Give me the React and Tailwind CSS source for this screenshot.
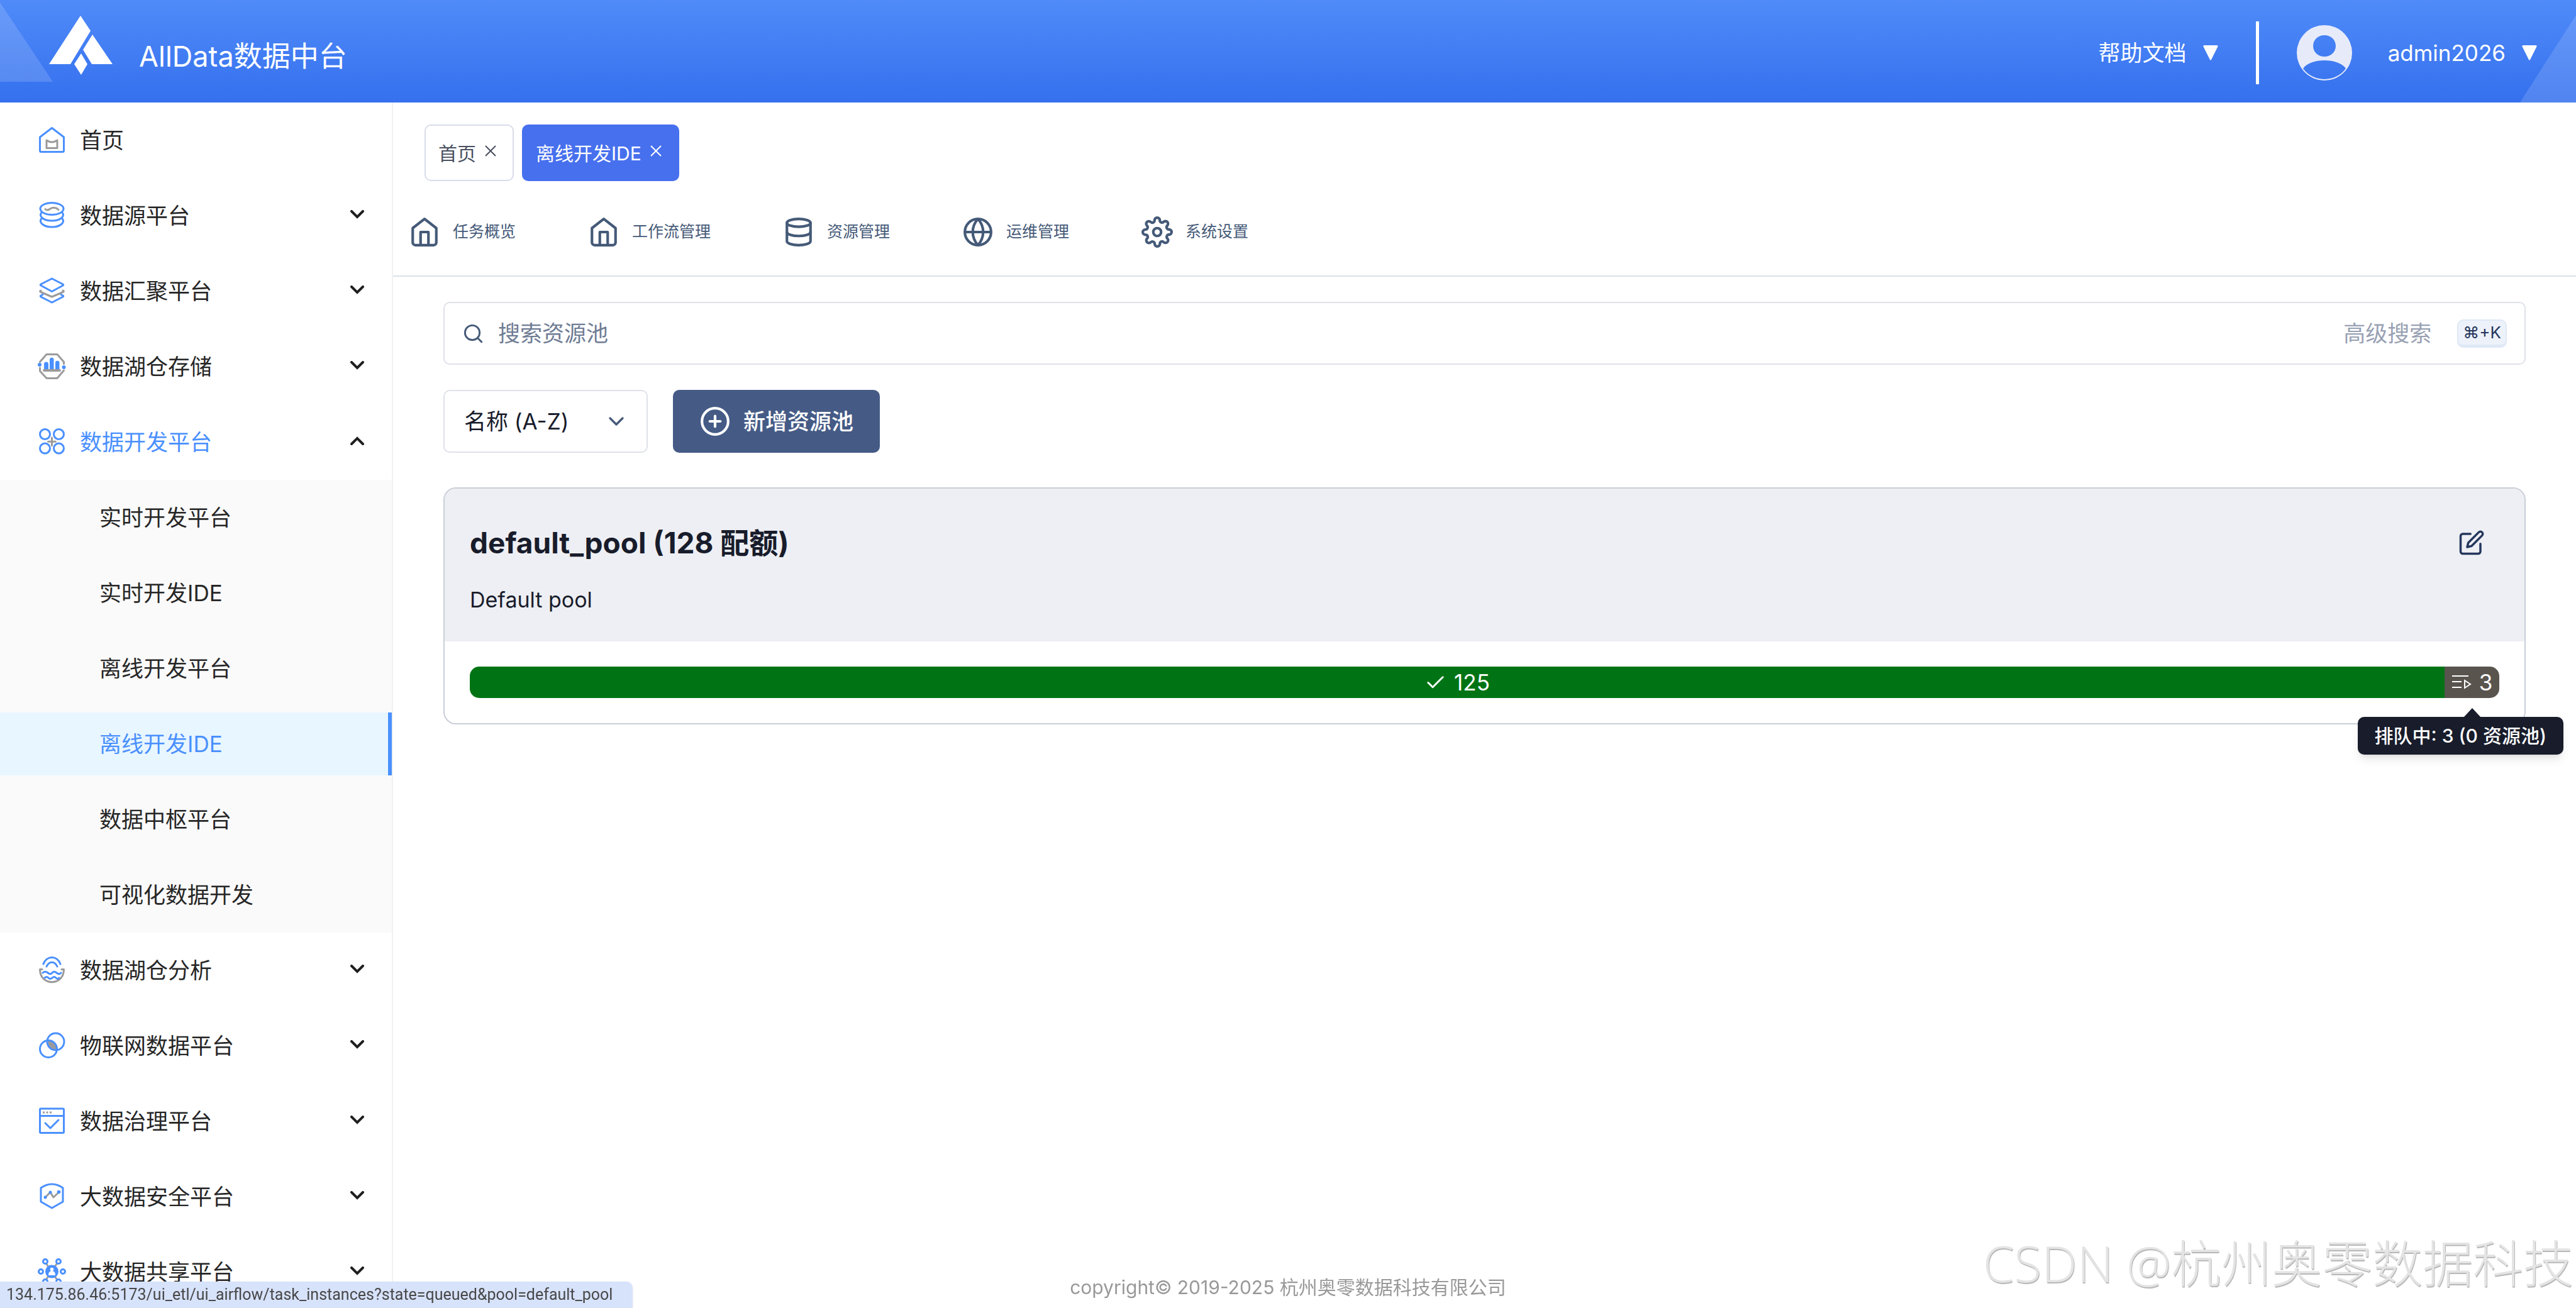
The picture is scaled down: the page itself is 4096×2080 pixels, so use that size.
import { useState } from "react";
import { FiHome, FiDatabase, FiGlobe, FiSettings, FiSearch, FiPlusCircle, FiEdit, FiCheck, FiChevronDown } from "react-icons/fi";

const BLUE = "#4a90ff";
const GREY = "#9b9b9b";

const MENU = [
  { key: "home", label: "首页" },
  { key: "source", label: "数据源平台", expandable: true },
  { key: "gather", label: "数据汇聚平台", expandable: true },
  { key: "storage", label: "数据湖仓存储", expandable: true },
  {
    key: "develop",
    label: "数据开发平台",
    expandable: true,
    children: ["实时开发平台", "实时开发IDE", "离线开发平台", "离线开发IDE", "数据中枢平台", "可视化数据开发"],
  },
  { key: "analysis", label: "数据湖仓分析", expandable: true },
  { key: "iot", label: "物联网数据平台", expandable: true },
  { key: "govern", label: "数据治理平台", expandable: true },
  { key: "security", label: "大数据安全平台", expandable: true },
  { key: "share", label: "大数据共享平台", expandable: true },
];

const NAV = [
  { label: "任务概览", Icon: FiHome },
  { label: "工作流管理", Icon: FiHome },
  { label: "资源管理", Icon: FiDatabase },
  { label: "运维管理", Icon: FiGlobe },
  { label: "系统设置", Icon: FiSettings },
];

const ICONS = {
  home: (
    <>
      <path d="M22.5 2.5 41.5 17v21.5a2 2 0 0 1-2 2h-34a2 2 0 0 1-2-2V17Z" stroke={BLUE} />
      <path d="M14 22q8.500 6 17 0v12.500H14Z" stroke={GREY} />
    </>
  ),
  source: (
    <>
      <ellipse cx="22.5" cy="11" rx="18.5" ry="9.5" stroke={BLUE} />
      <path d="M6 17c-5 6 3 13 16.500 13S44 23 39 17M6 26.500c-5 6 3 13.500 16.500 13.500S44 32.500 39 26.500" stroke={BLUE} />
      <path d="M12 11.500q3 3 7 0t8-2q3 0 6 3" stroke={GREY} />
    </>
  ),
  gather: (
    <>
      <path d="m5 21-1 0.500q-1 1 1 2L22.500 31 40 23.500q2-1 1-2L40 21" stroke={GREY} />
      <path d="M22.500 2 40 11q1.500 1 0 2L22.500 22.500 5 13q-1.500-1 0-2Z" stroke={BLUE} />
      <path d="M8 27.500 5 29q-1.500 1 0 2l17.500 9L40 31q1.500-1 0-2l-3-1.500" stroke={BLUE} />
    </>
  ),
  storage: (
    <>
      <path d="M3.500 14.500 14 2.500h17l10.500 12v3M41.500 28 31 40.500H14L3.500 29v-5" stroke={GREY} />
      <circle cx="3" cy="19" r="3" fill={BLUE} />
      <circle cx="41.500" cy="23" r="3" fill={BLUE} />
      <path d="M10 27v-9a3.500 3.500 0 0 1 7 0v9ZM19 27V11a3.200 3.200 0 0 1 6.500 0v16ZM28 27V16a3.200 3.200 0 0 1 6.500 0v11Z" fill={BLUE} />
      <path d="M10 28h25" stroke={GREY} strokeWidth="4" />
    </>
  ),
  develop: (
    <>
      <circle cx="11.5" cy="9.5" r="8" stroke={BLUE} />
      <circle cx="33.5" cy="9.5" r="8" stroke={BLUE} />
      <circle cx="11.5" cy="32" r="8" stroke={BLUE} />
      <circle cx="33.5" cy="32" r="8" stroke={BLUE} />
      <path d="M22.500 15v12.500M16.500 21.200h12" stroke={GREY} />
    </>
  ),
  analysis: (
    <>
      <path d="M9 12C14-2 31-2 36 12M14 16c4-9 13-9 17 0" stroke={BLUE} />
      <path d="M7 20.500H3.500c0 27 38 27 38 0H38" stroke={GREY} />
      <path d="M8 26q4-3.500 8 0t7 0 7 0 7 0M11 34q3-3 6 0t6 0 6 0 5 0" stroke={BLUE} />
    </>
  ),
  iot: (
    <>
      <path d="M15 13.500A14 14 0 0 1 31 29.500 14 14 0 0 1 15 13.500Z" fill={GREY} />
      <circle cx="28.500" cy="15.500" r="13.500" stroke={BLUE} />
      <circle cx="17" cy="27" r="13.500" stroke={BLUE} />
    </>
  ),
  govern: (
    <>
      <rect x="3.500" y="2" width="38" height="38.500" rx="1.500" stroke={BLUE} />
      <path d="M3.500 13.500h38M12 25l8 8 13-13" stroke={BLUE} />
      <path d="M8 8h3M13.500 8h3M19 8h3" stroke={GREY} strokeLinecap="butt" />
    </>
  ),
  security: (
    <>
      <path d="M5 8q17.500-12 35 0v22L22.500 40 5 30Z" stroke={BLUE} />
      <path d="m12 23 8-8 5 8 8.500-8" stroke={GREY} />
      <circle cx="12" cy="23" r="2.500" fill={BLUE} />
      <circle cx="20" cy="15" r="2.500" fill={BLUE} />
      <circle cx="33.500" cy="14.500" r="2.800" fill={BLUE} />
    </>
  ),
  share: (
    <>
      <path d="m12 6 20 30M32 6 12 36" stroke={GREY} />
      <circle cx="22.500" cy="21" r="10.500" fill={BLUE} />
      <circle cx="22.500" cy="17.500" r="2.800" fill="#fff" />
      <path d="M17 27q0-7 5.500-7t5.500 7Z" fill="#fff" />
      <g stroke={BLUE} fill="#fff">
        <circle cx="12" cy="5" r="3.500" />
        <circle cx="33" cy="5" r="3.500" />
        <circle cx="5" cy="21" r="3.500" />
        <circle cx="40" cy="21" r="3.500" />
        <circle cx="12" cy="37" r="3.500" />
        <circle cx="33" cy="37" r="3.500" />
      </g>
    </>
  ),
};

function MenuIcon({ name }) {
  return (
    <svg viewBox="0 0 45 45" className="size-[45px] shrink-0" fill="none" strokeWidth="3" strokeLinecap="round" strokeLinejoin="round" aria-hidden="true">
      {ICONS[name]}
    </svg>
  );
}

function Caret() {
  return (
    <svg viewBox="0 0 24 24" className="size-6" fill="#fff" aria-hidden="true">
      <path d="M2 0h20q2 0 1.500 2L13 23q-1 1.500-2 0L.5 2Q0 0 2 0Z" />
    </svg>
  );
}

function Header() {
  return (
    <header className="relative flex h-[163px] shrink-0 items-center justify-between bg-linear-to-b from-[#508bf9] to-[#3570ee] pr-[62px] pl-[78px] text-white">
      {/* Corner decorations */}
      <svg viewBox="0 0 84 130" className="absolute top-0 left-0 h-[130px] w-[84px]" aria-hidden="true">
        <path d="M0 4 84 130H0Z" fill="#fff" fillOpacity="0.15" />
      </svg>
      <svg viewBox="0 0 89 163" className="absolute right-0 bottom-0 h-[163px] w-[89px]" aria-hidden="true">
        <path d="M89 24V163H0Z" fill="#fff" fillOpacity="0.14" />
      </svg>

      <div className="flex items-center">
        <svg viewBox="0 0 101 94" className="mb-5 h-[94px] w-[101px]" fill="#fff" aria-hidden="true">
          <path d="M50 0 66 24 34 77H0ZM69 30l32 47H68L54 54ZM51 60l10 17-10 17-11-17Z" />
        </svg>
        <h1 className="mt-4 ml-[42px] text-[45px] leading-[60px]">AllData数据中台</h1>
      </div>

      <div className="flex items-center pt-1 text-[35px] leading-[50px]">
        <button type="button" className="flex items-center gap-[26px]">
          帮助文档
          <Caret />
        </button>
        <div className="ml-[60px] h-[100px] w-[5px] bg-white" />
        <svg viewBox="0 0 88 88" className="mr-[57px] ml-[60px] size-[88px]" aria-hidden="true">
          <path
            fill="#e7ebf9"
            fillRule="evenodd"
            d="M44 0a44 44 0 1 1 0 88 44 44 0 0 1 0-88ZM44 16c-10 0-18 7-18 17s8 17 18 17 18-7 18-17-8-17-18-17ZM44 56c-14 0-28 4-34 13a42.500 42.500 0 0 0 68 0c-6-9-20-13-34-13Z"
          />
        </svg>
        <button type="button" className="flex items-center gap-[26px]">
          admin2026
          <Caret />
        </button>
      </div>
    </header>
  );
}

function Sidebar({ active, onSelect }) {
  const [open, setOpen] = useState("develop");

  return (
    <aside className="w-[625px] shrink-0 overflow-hidden border-r-2 border-[#f0f0f0] text-[35px] text-[#262626]">
      <ul>
        {MENU.map(item => (
          <li key={item.key}>
            <button
              type="button"
              onClick={() => setOpen(open === item.key ? null : item.key)}
              className={`flex h-[120px] w-full items-center pr-11 pl-[60px] ${open === item.key ? "text-[#4a90ff]" : ""}`}
            >
              <MenuIcon name={item.key} />
              <span className="ml-[22px] flex-1 text-left">{item.label}</span>
              {item.expandable && (
                <svg viewBox="0 0 22 14" className="mb-1 h-[14px] w-[22px]" fill="none" stroke="#1f1f1f" strokeWidth="4" strokeLinecap="round" aria-hidden="true">
                  <path d={open === item.key ? "M2 12l9-9 9 9" : "M2 2l9 9 9-9"} />
                </svg>
              )}
            </button>
            {item.children && open === item.key && (
              <ul className="bg-[#fafafa]">
                {item.children.map(child => (
                  <li key={child} className="py-[10px]">
                    <button
                      type="button"
                      onClick={() => onSelect(child)}
                      className={
                        child === active
                          ? "flex h-[100px] w-full items-center border-r-6 border-[#4a90ff] bg-[#e8f6ff] pl-[158px] text-[#4a90ff]"
                          : "flex h-[100px] w-full items-center pl-[158px]"
                      }
                    >
                      {child}
                    </button>
                  </li>
                ))}
              </ul>
            )}
          </li>
        ))}
      </ul>
    </aside>
  );
}

function CloseIcon() {
  return (
    <svg viewBox="0 0 18 18" className="mb-2 size-[18px]" fill="none" stroke="currentColor" strokeWidth="2" aria-hidden="true">
      <path d="m1 1 16 16M17 1 1 17" />
    </svg>
  );
}

function PageTabs() {
  return (
    <div className="flex gap-[13px] pt-[35px] pl-[50px] text-[30px]">
      <button type="button" className="flex h-[90px] items-center gap-[14px] rounded-[10px] border-2 border-[#d9dcea] pt-[2px] pr-[26px] pl-5 text-[#495060]">
        首页
        <CloseIcon />
      </button>
      <button type="button" className="flex h-[90px] items-center gap-[14px] rounded-[10px] border-2 border-[#4770ee] bg-[#4770ee] pt-[2px] pr-[26px] pl-5 text-white">
        离线开发IDE
        <CloseIcon />
      </button>
    </div>
  );
}

function PoolCard() {
  return (
    <section className="mt-[55px] rounded-[20px] border-2 border-[#c9ced8]">
      <div className="rounded-t-[18px] bg-[#eeeff4] px-10 pt-9 pb-10 text-[#181c2b]">
        <div className="flex h-[100px] items-center justify-between">
          <h2 className="text-[46px] font-bold">default_pool (128 配额)</h2>
          <button type="button" aria-label="Edit pool" className="flex h-full w-[88px] items-center justify-center text-[#24365c]">
            <FiEdit className="size-[42px]" />
          </button>
        </div>
        <p className="mt-[15px] text-[34px] leading-[52px]">Default pool</p>
      </div>

      <div className="p-10">
        {/* Slot usage */}
        <div className="flex h-[50px] text-[35px] leading-[50px] text-white">
          <a href="#success" className="flex flex-1 items-center justify-center gap-3 rounded-l-[15px] bg-[#007414]">
            <FiCheck className="size-[35px]" />
            125
          </a>
          <a href="#queued" className="relative flex w-[87px] items-center justify-center gap-3 rounded-r-[15px] bg-[#59544e]">
            <svg viewBox="0 0 32 24" className="h-6 w-8" fill="none" stroke="#fff" strokeWidth="2" aria-hidden="true">
              <path d="M1 2h26M1 11h15M1 20h15M21 9v12l9-6Z" />
            </svg>
            3
            {/* Tooltip */}
            <span role="tooltip" className="absolute top-[80px] -right-[102px] z-10 h-[60px] rounded-[10px] bg-[#181c2b] px-[27px] text-[30px] leading-[60px] font-medium whitespace-nowrap shadow-lg">
              排队中: 3 (0 资源池)
              <svg viewBox="0 0 28 15" className="absolute -top-[14px] right-[131px] h-[15px] w-7" fill="#181c2b" aria-hidden="true">
                <path d="M14 0 28 15H0Z" />
              </svg>
            </span>
          </a>
        </div>
      </div>
    </section>
  );
}

export default function App() {
  const [active, setActive] = useState("离线开发IDE");
  const [query, setQuery] = useState("");

  return (
    <div className="flex h-screen flex-col overflow-hidden bg-white font-['Inter','Noto_Sans_CJK_SC',sans-serif]">
      <Header />

      <div className="flex min-h-0 flex-1">
        <Sidebar active={active} onSelect={setActive} />

        <main className="min-w-0 flex-1">
          <PageTabs />

          <nav className="mt-3 flex h-[140px] items-center gap-[115px] border-b-2 border-[#dce2e7] pl-[25px] text-[25px] text-[#455a78]">
            {NAV.map(({ label, Icon }) => (
              <a key={label} href="#nav" className="flex items-center gap-5">
                <Icon className="size-[50px]" />
                {label}
              </a>
            ))}
          </nav>

          <div className="px-20 pt-10 text-[35px]">
            {/* Search */}
            <div className="flex h-[100px] items-center rounded-[10px] border-2 border-[#dfe2e9] pr-7 pl-7">
              <FiSearch className="size-[35px] shrink-0 text-[#455a78]" />
              <input
                type="text"
                aria-label="搜索资源池"
                placeholder="搜索资源池"
                value={query}
                onChange={e => setQuery(e.target.value)}
                className="ml-[22px] min-w-0 flex-1 outline-none placeholder:text-[#6f7c94]"
              />
              <button type="button" className="text-[#98a1b3]">高级搜索</button>
              <kbd className="ml-[41px] flex h-[45px] items-center rounded-[10px] border-2 border-b-5 border-[#dfe8f5] bg-[#edf2fa] px-[7px] font-['Inter','Noto_Sans_CJK_SC',sans-serif] text-[26px] text-[#24365c]">
                ⌘+K
              </kbd>
            </div>

            <div className="mt-10 flex gap-10">
              <div className="relative">
                <select
                  aria-label="排序"
                  className="h-[100px] w-[325px] appearance-none rounded-[10px] border-2 border-[#dfe2e9] pl-[31px] text-[#181c2b]"
                >
                  <option>名称 (A-Z)</option>
                  <option>名称 (Z-A)</option>
                </select>
                <FiChevronDown className="pointer-events-none absolute top-[30px] right-[30px] size-10 text-[#455a78]" />
              </div>
              <button type="button" className="flex h-[100px] items-center gap-5 rounded-[10px] bg-[#455b86] px-[42px] font-medium text-white">
                <FiPlusCircle className="size-[50px]" />
                新增资源池
              </button>
            </div>

            <PoolCard />
          </div>
        </main>
      </div>

      <footer className="pointer-events-none fixed inset-x-0 bottom-2 text-center text-[30px] leading-[50px] text-[#999]">
        copyright© 2019-2025 杭州奥零数据科技有限公司
      </footer>

      <div className="pointer-events-none fixed right-1 bottom-3 text-[80px] leading-[120px] font-light text-[#e4e4e4] [font-family:'Open_Sans','Noto_Sans_CJK_SC',sans-serif] [text-shadow:1px_2px_0_#b8b8b8]">
        CSDN @杭州奥零数据科技
      </div>

      {/* Link target shown by the browser */}
      <div className="fixed bottom-0 left-0 h-[42px] rounded-tr-[10px] bg-[#d7e2fb] pr-8 pl-[10px] font-[Roboto,sans-serif] text-[25px] leading-[42px] text-[#474747] shadow">
        134.175.86.46:5173/ui_etl/ui_airflow/task_instances?state=queued&amp;pool=default_pool
      </div>
    </div>
  );
}
